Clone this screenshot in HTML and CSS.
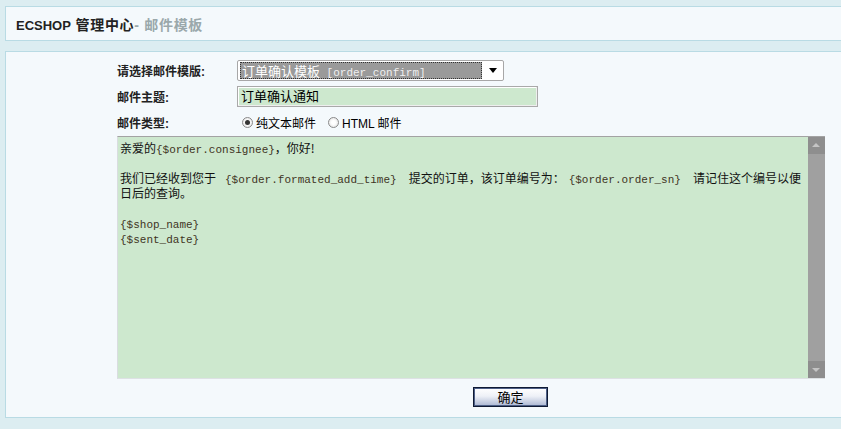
FILE: index.html
```html
<!DOCTYPE html>
<html lang="zh-CN">
<head>
  <meta charset="UTF-8">
  <title>ECSHOP 管理中心 - 邮件模板</title>
  <link rel="stylesheet" href="styles.css">
</head>
<body>

<div class="header">
  <h1><span class="brand">ECSHOP</span> 管理中心<span class="sub">- 邮件模板</span></h1>
</div>

<div class="main">
  <form class="mail-form">
    <div class="row">
      <label class="label">请选择邮件模版:</label>
      <div class="select">
        <span class="select-value"><span class="cn">订单确认模板</span> [order_confirm]</span>
        <span class="select-arrow"></span>
      </div>
    </div>
    <div class="row">
      <label class="label">邮件主题:</label>
      <div class="input">订单确认通知</div>
    </div>
    <div class="row radio-row">
      <label class="label">邮件类型:</label>
      <div class="radios">
        <span class="radio checked"></span><span class="radio-text">纯文本邮件</span>
        <span class="radio"></span><span class="radio-text">HTML 邮件</span>
      </div>
    </div>
    <div class="textarea">
      <div class="text">
        <div class="line">亲爱的<span class="code">{$order.consignee}</span>，你好!</div>
        <div class="line"></div>
        <div class="line">我们已经收到您于<span class="code gap">{$order.formated_add_time}</span>提交的订单，该订单编号为：<span class="code gap-r">{$order.order_sn}</span>请记住这个编号以便</div>
        <div class="line">日后的查询。</div>
        <div class="line"></div>
        <div class="line"><span class="code">{$shop_name}</span></div>
        <div class="line"><span class="code">{$sent_date}</span></div>
      </div>
      <div class="scrollbar">
        <span class="scroll-btn up"></span>
        <span class="scroll-track"></span>
        <span class="scroll-btn down"></span>
      </div>
    </div>
    <div class="actions">
      <button type="button" class="button">确定</button>
    </div>
  </form>
</div>

</body>
</html>
```

FILE: styles.css
```css
body {
  margin: 0;
  padding: 6px 0 0 5px;
  background-color: #dcedf1;
  font-family: "Liberation Sans", "Noto Sans CJK SC", sans-serif;
  font-size: 12px;
  color: #000;
  overflow: hidden;
}

.header {
  height: 33px;
  margin-right: -20px;
  background-color: #f4f9fc;
  border: 1px solid #b9dbe4;
  display: flex;
  align-items: center;
  padding-left: 10px;
}

.header h1 {
  margin: 0;
  font-size: 14px;
  font-weight: bold;
  color: #222;
  letter-spacing: 0.7px;
}

.header .brand {
  font-size: 13px;
  letter-spacing: 0;
}

.header .sub {
  color: #9aa8ab;
}

.main {
  margin-top: 10px;
  margin-right: -20px;
  background-color: #f4f9fc;
  border: 1px solid #b9dbe4;
  padding: 8px 0 10px 111px;
}

.mail-form {
  width: 708px;
}

.row {
  display: flex;
  align-items: center;
  height: 21px;
  margin-bottom: 5px;
}

.radio-row {
  height: 20px;
  margin-bottom: 4px;
}

.label {
  width: 120px;
  font-weight: bold;
  font-size: 12px;
  color: #222;
}

.select {
  width: 261px;
  height: 19px;
  border: 1px solid #a7a7a7;
  border-radius: 2px;
  background-color: #fff;
  display: flex;
  align-items: center;
  padding: 0 2px;
  box-sizing: content-box;
}

.select-value {
  width: 242px;
  height: 17px;
  line-height: 15px;
  background-color: #9a9a9a;
  border: 1px dotted #333;
  box-sizing: border-box;
  color: #f0f0f0;
  font-family: "Liberation Mono", monospace;
  font-size: 11px;
  white-space: nowrap;
  overflow: hidden;
  padding-left: 1px;
}

.select-value .cn {
  font-family: "Noto Sans CJK SC", sans-serif;
  font-size: 13px;
  line-height: 15px;
  color: #fff;
}

.select-arrow {
  margin-left: 7px;
  width: 0;
  height: 0;
  border-left: 4px solid transparent;
  border-right: 4px solid transparent;
  border-top: 5px solid #000;
}

.input {
  width: 296px;
  height: 19px;
  line-height: 19px;
  border: 1px solid #a9a9a9;
  box-shadow: inset -1px -1px 0 #eee, inset 1px 1px 0 #fff;
  background-color: #cde8ce;
  padding-left: 3px;
  box-sizing: content-box;
  font-size: 13px;
}

.radios {
  display: flex;
  align-items: center;
  padding-left: 5px;
}

.radio {
  width: 11px;
  height: 11px;
  border-radius: 50%;
  border: 1px solid #8a8a8a;
  background: radial-gradient(circle, #fff 30%, #dcdcdc 100%);
  box-sizing: border-box;
  position: relative;
  margin-right: 3px;
}

.radio.checked::after {
  content: "";
  position: absolute;
  left: 2px;
  top: 2px;
  width: 5px;
  height: 5px;
  border-radius: 50%;
  background-color: #333;
}

.radio-text {
  margin-right: 12px;
}

.textarea {
  display: flex;
  height: 243px;
  border-top: 1px solid #a3a3a3;
  border-left: 1px solid #d9dde0;
  border-bottom: 1px solid #dde1e4;
  background-color: #cde8ce;
  box-sizing: border-box;
}

.text {
  flex: 1;
  padding: 3px 0 0 2px;
  font-family: "Noto Sans CJK SC", sans-serif;
  font-size: 12px;
  color: #111;
}

.line {
  height: 15px;
  line-height: 15px;
  white-space: nowrap;
}

.code {
  font-family: "Liberation Mono", monospace;
  font-size: 11px;
  line-height: 15px;
  color: #3f3424;
}

.code.gap {
  margin: 0 12px 0 9px;
}

.code.gap-r {
  margin: 0 12px 0 4px;
}

.scrollbar {
  width: 17px;
  display: flex;
  flex-direction: column;
  background-color: #a0a0a0;
}

.scroll-btn {
  height: 17px;
  background-color: #8e8e8e;
  position: relative;
}

.scroll-btn::after {
  content: "";
  position: absolute;
  left: 4px;
  width: 0;
  height: 0;
  border-left: 4px solid transparent;
  border-right: 4px solid transparent;
}

.scroll-btn.up::after {
  top: 6px;
  border-bottom: 4px solid #c4c4c4;
}

.scroll-btn.down::after {
  top: 7px;
  border-top: 4px solid #c4c4c4;
}

.scroll-track {
  flex: 1;
}

.actions {
  padding: 8px 0 0 356px;
}

.button {
  width: 75px;
  height: 20px;
  border: 1px solid #0f1a33;
  box-shadow: inset 0 0 0 1px #4d5f86;
  background: linear-gradient(#ffffff, #eef1f7 45%, #aab6d2);
  font-family: "Noto Sans CJK SC", sans-serif;
  font-size: 13px;
  line-height: 16px;
  padding: 0;
  color: #000;
  cursor: pointer;
}
```
